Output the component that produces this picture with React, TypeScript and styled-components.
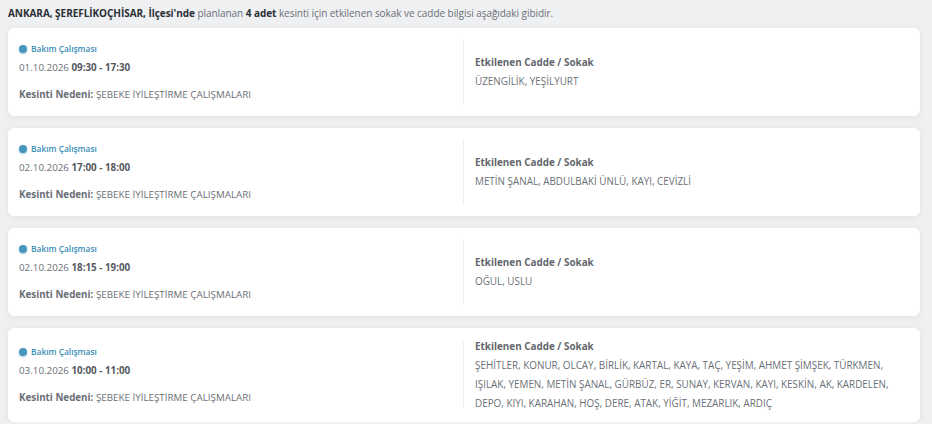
import React from "react";
import styled, { createGlobalStyle } from "styled-components";

const Global = createGlobalStyle`
  html, body { margin: 0; padding: 0; background: #eff0f2; }
  body { font-family: "Open Sans", "Liberation Sans", sans-serif; }
  * { box-sizing: border-box; }
`;

const Page = styled.div`
  padding: 0 12px 0 8px;
  width: 932px;
`;

const Header = styled.p`
  margin: 0 0 7px;
  padding-top: 5px;
  font-size: 10px;
  line-height: 16px;
  color: #6b6f76;
  letter-spacing: -0.05px;
  b { color: #2b2f36; font-weight: 700; }
`;

const List = styled.div`
  display: flex;
  flex-direction: column;
  gap: 12px;
`;

const Card = styled.div`
  background: #fff;
  border-radius: 6px;
  box-shadow: 0 1px 6px rgba(0, 0, 0, 0.07);
  padding: 9px 11px;
  display: grid;
  grid-template-columns: 1fr 1fr;
  align-items: center;
`;

const Left = styled.div`
  margin: 2px 0;
  height: 66px;
  border-right: 1px solid #ececee;
  padding: 3px 0;
  display: flex;
  flex-direction: column;
`;

const Badge = styled.div`
  display: flex;
  align-items: center;
  gap: 4px;
  font-size: 8.4px;
  line-height: 14px;
  font-weight: 600;
  color: #3a8db5;
`;

const Dot = styled.span`
  width: 8px;
  height: 8px;
  border-radius: 50%;
  background: #4896bf;
  box-shadow: 0 1px 2px rgba(72, 150, 191, 0.5);
`;

const DateLine = styled.div`
  margin-top: 5px;
  font-size: 9.8px;
  line-height: 14px;
  color: #6b6f76;
  b { font-weight: 700; color: #55595f; }
`;

const Reason = styled.div`
  margin-top: 13px;
  font-size: 9.8px;
  line-height: 14px;
  color: #6b6f76;
  b { font-weight: 700; color: #6b6f76; }
`;

const Right = styled.div`
  padding-left: 11px;
  display: flex;
  flex-direction: column;
`;

const Title = styled.div`
  font-size: 9.9px;
  line-height: 19px;
  font-weight: 700;
  color: #63676d;
`;

const Streets = styled.div`
  font-size: 9.9px;
  line-height: 19px;
  color: #6b6f76;
`;

type Item = { date: string; time: string; streets: string };

const items: Item[] = [
  { date: "01.10.2026", time: "09:30 - 17:30", streets: "ÜZENGİLİK, YEŞİLYURT" },
  { date: "02.10.2026", time: "17:00 - 18:00", streets: "METİN ŞANAL, ABDULBAKİ ÜNLÜ, KAYI, CEVİZLİ" },
  { date: "02.10.2026", time: "18:15 - 19:00", streets: "OĞUL, USLU" },
  {
    date: "03.10.2026",
    time: "10:00 - 11:00",
    streets:
      "ŞEHİTLER, KONUR, OLCAY, BİRLİK, KARTAL, KAYA, TAÇ, YEŞİM, AHMET ŞİMŞEK, TÜRKMEN, IŞILAK, YEMEN, METİN ŞANAL, GÜRBÜZ, ER, SUNAY, KERVAN, KAYI, KESKİN, AK, KARDELEN, DEPO, KIYI, KARAHAN, HOŞ, DERE, ATAK, YİĞİT, MEZARLIK, ARDIÇ",
  },
];

export default function App() {
  return (
    <Page>
      <Global />
      <Header>
        <b>ANKARA, ŞEREFLİKOÇHİSAR, İlçesi'nde</b> planlanan <b>4 adet</b> kesinti için etkilenen sokak ve cadde bilgisi aşağıdaki gibidir.
      </Header>
      <List>
        {items.map((it, i) => (
          <Card key={i}>
            <Left>
              <Badge>
                <Dot />
                Bakım Çalışması
              </Badge>
              <DateLine>
                {it.date} <b>{it.time}</b>
              </DateLine>
              <Reason>
                <b>Kesinti Nedeni:</b> ŞEBEKE İYİLEŞTİRME ÇALIŞMALARI
              </Reason>
            </Left>
            <Right>
              <Title>Etkilenen Cadde / Sokak</Title>
              <Streets>{it.streets}</Streets>
            </Right>
          </Card>
        ))}
      </List>
    </Page>
  );
}
